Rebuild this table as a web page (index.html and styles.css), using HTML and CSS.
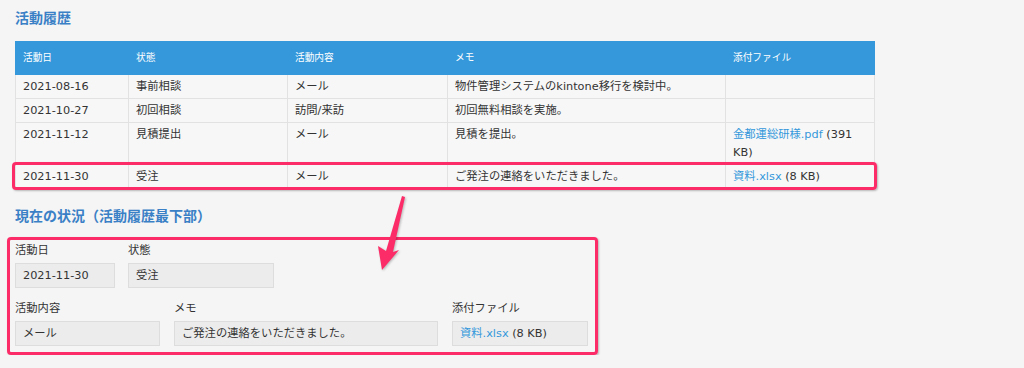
FILE: index.html
```html
<!DOCTYPE html>
<html lang="ja">
<head>
  <meta charset="UTF-8" />
  <meta name="viewport" content="width=device-width, initial-scale=1.0" />
  <title>活動履歴</title>
  <link rel="stylesheet" href="styles.css">
</head>
<body>
  <div class="page">
    <h2 class="section-title">活動履歴</h2>

    <div class="history-wrap">
      <table class="history">
        <colgroup>
          <col style="width: 113px">
          <col style="width: 159px">
          <col style="width: 160px">
          <col style="width: 278px">
          <col style="width: 149px">
        </colgroup>
        <thead>
          <tr>
            <th>活動日</th>
            <th>状態</th>
            <th>活動内容</th>
            <th>メモ</th>
            <th>添付ファイル</th>
          </tr>
        </thead>
        <tbody>
          <tr>
            <td>2021-08-16</td>
            <td>事前相談</td>
            <td>メール</td>
            <td>物件管理システムのkintone移行を検討中。</td>
            <td></td>
          </tr>
          <tr>
            <td>2021-10-27</td>
            <td>初回相談</td>
            <td>訪問/来訪</td>
            <td>初回無料相談を実施。</td>
            <td></td>
          </tr>
          <tr>
            <td>2021-11-12</td>
            <td>見積提出</td>
            <td>メール</td>
            <td>見積を提出。</td>
            <td><a href="#">金都運総研様.pdf</a> (391 KB)</td>
          </tr>
          <tr>
            <td>2021-11-30</td>
            <td>受注</td>
            <td>メール</td>
            <td>ご発注の連絡をいただきました。</td>
            <td><a href="#">資料.xlsx</a> (8 KB)</td>
          </tr>
        </tbody>
      </table>
      <div class="mark mark-row"></div>
    </div>

    <h2 class="section-title title-current">現在の状況（活動履歴最下部）</h2>

    <div class="mark current">
      <div class="field-row">
        <div class="field">
          <div class="field-label">活動日</div>
          <div class="field-value w-date">2021-11-30</div>
        </div>
        <div class="field">
          <div class="field-label">状態</div>
          <div class="field-value w-status">受注</div>
        </div>
      </div>
      <div class="field-row">
        <div class="field">
          <div class="field-label">活動内容</div>
          <div class="field-value w-type">メール</div>
        </div>
        <div class="field">
          <div class="field-label">メモ</div>
          <div class="field-value w-memo">ご発注の連絡をいただきました。</div>
        </div>
        <div class="field">
          <div class="field-label">添付ファイル</div>
          <div class="field-value w-file"><a href="#">資料.xlsx</a> (8 KB)</div>
        </div>
      </div>
    </div>

    <!-- arrow from the last row down to the current status -->
    <svg class="arrow" width="50" height="90" viewBox="0 0 50 90">
      <polygon points="32,6 35,7 23,62 29,60 12,80 8,56 16,61" fill="#fc2c68" />
    </svg>
  </div>
</body>
</html>
```

FILE: styles.css
```css
:root {
  --blue: #3498db;
  --title: #3a80c6;
  --pink: #fc2c68;
  --text: #333;
  --line: #e2e2e2;
  --bg: #f5f5f5;
}

body {
  margin: 0;
  background: var(--bg);
  color: var(--text);
  font-family: "DejaVu Sans", "Noto Sans CJK JP", sans-serif;
  font-size: 11.3px;
}

.page {
  position: relative;
  padding: 7px 0 0 15px;
}

a {
  color: var(--blue);
  text-decoration: none;
}

.section-title {
  margin: 0;
  font-family: "Noto Sans CJK JP", sans-serif;
  font-size: 14px;
  font-weight: bold;
  line-height: 20px;
  color: var(--title);
}

.history-wrap {
  position: relative;
  width: 859px;
  margin-top: 14px;
}

.history {
  width: 859px;
  table-layout: fixed;
  border-collapse: collapse;
}

.history th {
  background: var(--blue);
  color: #fff;
  font-weight: normal;
  font-size: 9.7px;
  text-align: left;
  line-height: 16px;
  padding: 8px 7px;
  border: 1px solid var(--blue);
}

.history td {
  background: #f7f7f7;
  line-height: 18px;
  padding: 3px 7px 2px;
  vertical-align: top;
  border: 1px solid var(--line);
}

.mark {
  border: 3px solid var(--pink);
  border-radius: 4px;
  box-shadow: 1px 1px 2px rgba(0, 0, 0, 0.25);
}

.mark-row {
  position: absolute;
  left: -3px;
  right: -3px;
  bottom: -1px;
  height: 22px;
}

.title-current {
  margin-top: 16px;
}

.current {
  width: 573px;
  margin: 12px 0 0 -8px;
  padding: 2px 7px 6px 5px;
}

.field-row {
  display: flex;
  gap: 13px;
}

.field-row + .field-row {
  margin-top: 12px;
}

.field-row:last-child {
  gap: 14px;
}

.field-label {
  line-height: 18px;
}

.field-value {
  margin-top: 3px;
  height: 23px;
  line-height: 23px;
  padding: 0 7px;
  background: #ececec;
  border: 1px solid #dddddd;
  white-space: nowrap;
}

.w-date { width: 84px; }
.w-status { width: 130px; }
.w-type { width: 129px; }
.w-memo { width: 248px; }
.w-file { width: 120px; }

.arrow {
  position: absolute;
  left: 370px;
  top: 190px;
  filter: drop-shadow(1px 1px 1px rgba(0, 0, 0, 0.25));
}
```
